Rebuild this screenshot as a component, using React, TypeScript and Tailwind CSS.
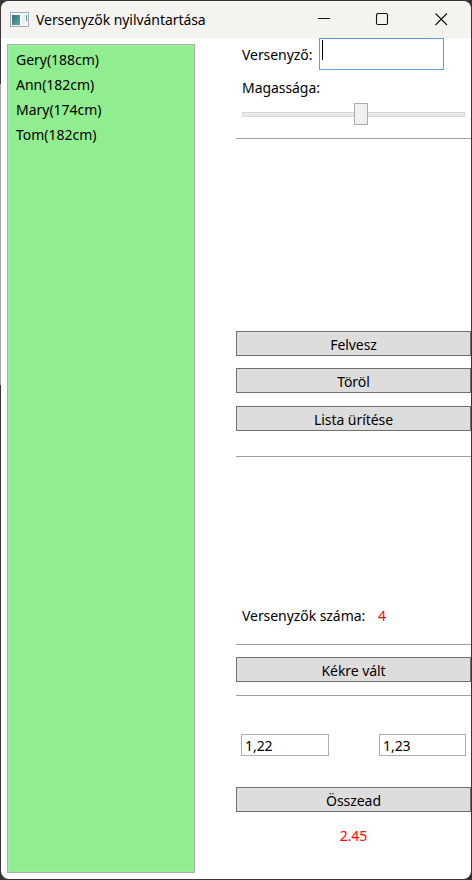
import type { ReactNode } from 'react';

const people = ['Gery(188cm)', 'Ann(182cm)', 'Mary(174cm)', 'Tom(182cm)'];

function Button({ children, className = '' }: { children: ReactNode; className?: string }) {
  return (
    <button className={`block h-[25px] w-full border border-[#707070] bg-[#dddddd] text-center leading-[25px] ${className}`}>
      {children}
    </button>
  );
}

function Line({ className = '' }: { className?: string }) {
  return <div className={`h-px w-full bg-[#a0a0a0] ${className}`} />;
}

function AppIcon() {
  return (
    <svg width="19" height="16" viewBox="0 0 19 16" shapeRendering="crispEdges">
      <defs>
        <linearGradient id="screen" x1="0" y1="0" x2="1" y2="1">
          <stop offset="0" stopColor="#37658f" />
          <stop offset="1" stopColor="#54b389" />
        </linearGradient>
      </defs>
      <rect x="0.5" y="0.5" width="18" height="14" fill="#f5f7f9" stroke="#a5abb1" />
      <rect x="2" y="3" width="8" height="10" fill="url(#screen)" />
      <rect x="12" y="3" width="3" height="9" fill="#e9edf0" />
      <rect x="16" y="3" width="1" height="6" fill="#4aa184" />
    </svg>
  );
}

export default function App() {
  return (
    <div className="h-[880px] w-[472px] overflow-hidden bg-[linear-gradient(#39363a_0_84px,#a5a5a5_84px_385px,#363437_385px)] pl-px pt-px font-['Noto_Sans','Segoe_UI',sans-serif] text-[14px] leading-[20px] tracking-[-0.06px] text-black">
      <div className="h-[879px] w-[471px] bg-[linear-gradient(90deg,transparent_50%,#363437_50%),linear-gradient(transparent_50%,#363437_50%)] pb-px pr-px">
        <div className="flex h-[878px] w-[470px] flex-col overflow-hidden rounded-[8px] bg-white">
          <header className="flex h-[37px] shrink-0 items-center bg-[#f4f3f0]">
            <div className="ml-[9px] mt-px">
              <AppIcon />
            </div>
            <h1 className="ml-[7px] mt-px grow whitespace-nowrap">Versenyzők nyilvántartása</h1>
            <svg className="mr-[23px]" width="130" height="14" viewBox="0 0 130 14" fill="none" stroke="#111" strokeWidth="1.1">
              <path d="M0 5.5H12" shapeRendering="crispEdges" />
              <rect x="58.5" y="0.5" width="11" height="11" rx="1.5" />
              <path d="M117.5 0.5L129 12M129 0.5L117.5 12" />
            </svg>
          </header>
          <main className="flex min-h-0 grow">
            <ul className="ml-[6px] mt-[6px] h-[829px] w-[188px] shrink-0 border border-[#abadb3] bg-[#90ee90] pl-[8px] pt-[2px] tracking-[-0.02px] shadow-[inset_0_0_0_1px_#9cf09c]">
              {people.map((p) => (
                <li key={p} className="h-[25px] leading-[25px]">
                  {p}
                </li>
              ))}
            </ul>
            <section className="ml-[41px] flex w-[235px] flex-col">
              <div className="flex h-[32px] pl-[6px]">
                <label className="w-[77px] pt-[7px]">Versenyző:</label>
                <div className="h-[32px] w-[125px] border border-[#569de5] pl-[2px] pt-px">
                  <div className="h-[20px] w-px bg-black" />
                </div>
              </div>
              <label className="mt-[8px] h-[20px] pl-[6px]">Magassága:</label>
              <div className="ml-[6px] mt-[5px] flex h-[22px] w-[223px] items-center">
                <div className="h-[5px] w-[112px] border border-r-0 border-[#d6d6d6] bg-[#e7eaea]" />
                <div className="h-[22px] w-[14px] border border-[#acacac] bg-[#f0f0f0]" />
                <div className="h-[5px] w-[97px] border border-l-0 border-[#d6d6d6] bg-[#e7eaea]" />
              </div>
              <Line className="mt-[13px]" />
              <Button className="mt-[192px]">Felvesz</Button>
              <Button className="mt-[12px]">Töröl</Button>
              <Button className="mt-[13px]">Lista ürítése</Button>
              <Line className="mt-[25px]" />
              <div className="mt-[149px] flex h-[20px] pl-[6px]">
                <span className="w-[136px] whitespace-nowrap">Versenyzők száma:</span>
                <span className="text-[#ff0000]">4</span>
              </div>
              <Line className="mt-[18px]" />
              <Button className="mt-[12px]">Kékre vált</Button>
              <Line className="mt-[13px]" />
              <div className="mt-[38px] flex justify-between pl-[5px] pr-[5px]">
                <div className="h-[22px] w-[88px] border border-[#abadb3] pl-[3px] leading-[21px]">1,22</div>
                <div className="h-[22px] w-[87px] border border-[#abadb3] pl-[3px] leading-[21px]">1,23</div>
              </div>
              <Button className="mt-[31px]">Összead</Button>
              <div className="mt-[14px] text-center text-[#ff0000]">2.45</div>
            </section>
          </main>
        </div>
      </div>
    </div>
  );
}
